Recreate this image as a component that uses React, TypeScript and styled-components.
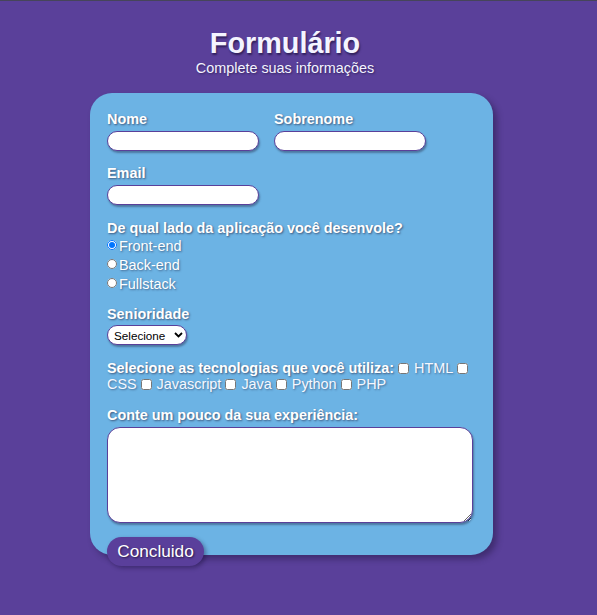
import React from "react";
import styled, { createGlobalStyle } from "styled-components";

const GlobalStyle = createGlobalStyle`
  html, body {
    margin: 0;
    padding: 0;
  }
  body {
    background: #5a409a;
    border-top: 1px solid #46455a;
    font-family: "Liberation Sans", Arial, sans-serif;
    color: #ffffff;
    min-height: 614px;
  }
`;

const Page = styled.div`
  display: flex;
  flex-direction: column;
  padding-left: 90px;
`;

const Header = styled.header`
  width: 390px;
  padding-top: 26px;
  text-align: center;
`;

const Title = styled.h1`
  margin: 0;
  font-size: 28.8px;
  line-height: 33px;
  font-weight: 700;
  color: #f4f4ff;
  text-shadow: 1px 2px 2px rgba(20, 10, 50, 0.6);
`;

const Subtitle = styled.p`
  margin: 0;
  font-size: 14.4px;
  line-height: 16px;
  color: #f4f4ff;
  text-shadow: 1px 1px 2px rgba(20, 10, 50, 0.5);
`;

const Card = styled.form`
  box-sizing: border-box;
  margin-top: 17px;
  width: 403px;
  height: 462px;
  padding: 18px 20px 0 17px;
  background: #6cb3e4;
  border-radius: 22px;
  box-shadow: 4px 4px 6px rgba(30, 20, 60, 0.45);
  display: flex;
  flex-direction: column;
`;

const Row = styled.div`
  display: flex;
  gap: 15px;
`;

const Field = styled.div<{ $mt?: number }>`
  display: flex;
  flex-direction: column;
  align-items: flex-start;
  gap: 4px;
  margin-top: ${(p) => p.$mt ?? 0}px;
`;

const Label = styled.label`
  font-size: 14.4px;
  line-height: 16px;
  font-weight: 700;
  color: #ffffff;
  text-shadow: 1px 1px 2px rgba(30, 30, 60, 0.6);
`;

const TextInput = styled.input`
  box-sizing: border-box;
  width: 152px;
  height: 20px;
  margin: 0;
  border: 1px solid #5a409a;
  border-radius: 10px;
  background: #ffffff;
  box-shadow: 1px 2px 2px rgba(30, 30, 60, 0.4);
  outline: none;
`;

const Group = styled.div<{ $mt: number }>`
  display: flex;
  flex-direction: column;
  align-items: flex-start;
  margin-top: ${(p) => p.$mt}px;
`;

const Option = styled.label`
  display: flex;
  align-items: center;
  height: 19px;
  font-size: 14.4px;
  color: #ffffff;
  text-shadow: 1px 1px 2px rgba(30, 30, 60, 0.5);
`;

const Radio = styled.input`
  width: 10px;
  height: 10px;
  margin: 0 2px 2px 0;
`;

const SelectWrap = styled.div`
  position: relative;
  margin-top: 3px;
  width: 80px;
  height: 20px;
`;

const Select = styled.select`
  box-sizing: border-box;
  appearance: none;
  width: 80px;
  height: 20px;
  margin: 0;
  padding: 0 0 0 6px;
  border: 1px solid #5a409a;
  border-radius: 10px;
  background: #ffffff;
  color: #000000;
  font-family: "Liberation Sans", Arial, sans-serif;
  font-size: 11.7px;
  box-shadow: 1px 2px 2px rgba(30, 30, 60, 0.4);
  outline: none;
`;

const Chevron = styled.svg`
  position: absolute;
  left: 67px;
  top: 7px;
  pointer-events: none;
`;

const TechText = styled.p`
  margin: 15px 0 0 0;
  font-size: 14.4px;
  line-height: 16px;
  color: #f6f8ff;
  text-shadow: 1px 1px 2px rgba(30, 30, 60, 0.45);
`;

const InlineLabel = styled.span`
  font-weight: 700;
  color: #ffffff;
  text-shadow: 1px 1px 2px rgba(30, 30, 60, 0.6);
`;

const Check = styled.input`
  width: 11px;
  height: 11px;
  margin: 0 1px 0 0;
  vertical-align: -1px;
`;

const TextArea = styled.textarea`
  box-sizing: border-box;
  width: 366px;
  height: 96px;
  margin: 0;
  border: 1px solid #5a409a;
  border-radius: 13px;
  background: #ffffff;
  box-shadow: 1px 2px 2px rgba(30, 30, 60, 0.4);
  outline: none;
`;

const Button = styled.button`
  box-sizing: border-box;
  align-self: flex-start;
  margin-top: 14px;
  width: 97px;
  height: 29px;
  padding: 0;
  border: none;
  border-radius: 15px;
  background: #5a3f9b;
  color: #ffffff;
  font-family: "Liberation Sans", Arial, sans-serif;
  font-size: 17.2px;
  text-shadow: 1px 1px 2px rgba(20, 10, 40, 0.7);
  box-shadow: 2px 2px 4px rgba(20, 10, 50, 0.4);
  flex-shrink: 0;
`;

const techs = ["HTML", "CSS", "Javascript", "Java", "Python", "PHP"];
const sides = [
  { id: "front", label: "Front-end", checked: true },
  { id: "back", label: "Back-end", checked: false },
  { id: "full", label: "Fullstack", checked: false },
];

export default function App() {
  return (
    <>
      <GlobalStyle />
      <Page>
        <Header>
          <Title>Formulário</Title>
          <Subtitle>Complete suas informações</Subtitle>
        </Header>
        <Card onSubmit={(e) => e.preventDefault()}>
          <Row>
            <Field>
              <Label htmlFor="nome">Nome</Label>
              <TextInput id="nome" type="text" />
            </Field>
            <Field>
              <Label htmlFor="sobrenome">Sobrenome</Label>
              <TextInput id="sobrenome" type="text" />
            </Field>
          </Row>
          <Field $mt={14}>
            <Label htmlFor="email">Email</Label>
            <TextInput id="email" type="email" />
          </Field>
          <Group $mt={15}>
            <Label>De qual lado da aplicação você desenvole?</Label>
            {sides.map((s) => (
              <Option key={s.id}>
                <Radio type="radio" name="lado" defaultChecked={s.checked} />
                {s.label}
              </Option>
            ))}
          </Group>
          <Group $mt={13}>
            <Label htmlFor="senioridade">Senioridade</Label>
            <SelectWrap>
              <Select id="senioridade" defaultValue="">
                <option value="">Selecione</option>
                <option value="junior">Júnior</option>
                <option value="pleno">Pleno</option>
                <option value="senior">Sênior</option>
              </Select>
              <Chevron width="9" height="6" viewBox="0 0 9 6">
                <path d="M1 1 L4.5 4.5 L8 1" fill="none" stroke="#000" strokeWidth="1.8" />
              </Chevron>
            </SelectWrap>
          </Group>
          <TechText>
            <InlineLabel>Selecione as tecnologias que você utiliza:</InlineLabel>
            {techs.map((t) => (
              <React.Fragment key={t}>
                {" "}
                <Check type="checkbox" /> {t}
              </React.Fragment>
            ))}
          </TechText>
          <Field $mt={15}>
            <Label htmlFor="exp">Conte um pouco da sua experiência:</Label>
            <TextArea id="exp" />
          </Field>
          <Button type="submit">Concluido</Button>
        </Card>
      </Page>
    </>
  );
}
